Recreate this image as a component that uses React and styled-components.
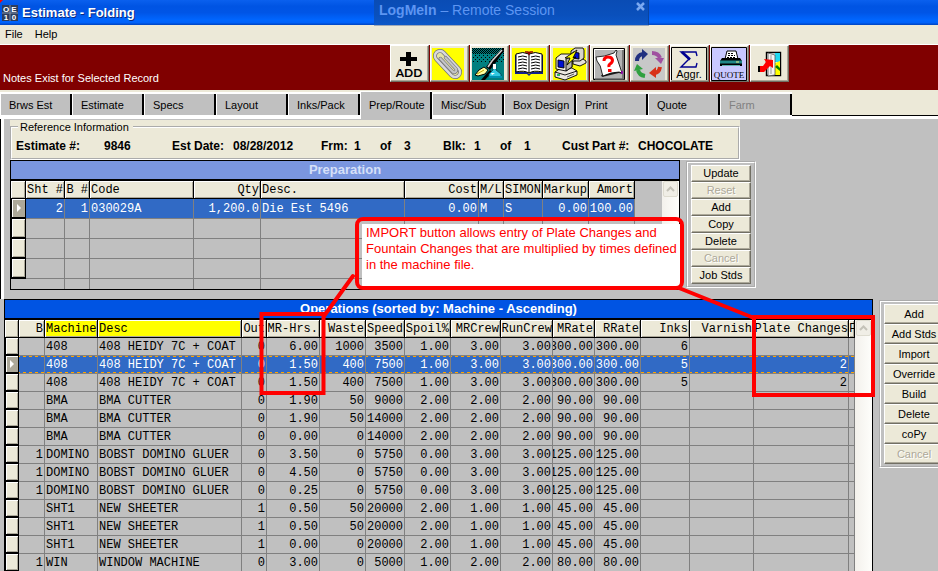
import React from "react";
import styled, { createGlobalStyle, css } from "styled-components";

const FACE = "#ece9d8";
const GRAY = "#c0c0c0";
const LINE = "#808080";
const SELECT = "#316ac5";
const SANS = '"Liberation Sans", Arial, sans-serif';
const MONO = '"Liberation Mono", "Courier New", monospace';

const Global = createGlobalStyle`
  * { box-sizing: border-box; }
  html, body, #root { height: 100%; }
  body { margin: 0; overflow: hidden; background: ${GRAY}; font: 11px/14px ${SANS}; color: #000; }
  button { font: inherit; color: inherit; }
`;

const Window = styled.div`
  position: relative;
  min-height: 100%;
  overflow: hidden;
`;

const TitleBar = styled.header`
  display: flex;
  align-items: center;
  gap: 4px;
  height: 25px;
  padding-left: 2px;
  background: linear-gradient(#0a60ee 0, #0054e3 25%, #0055e6 50%, #0066ff 80%, #0062fa 90%, #0043bf 100%);
`;

const Title = styled.h1`
  margin: 0;
  color: #fff;
  font: bold 13px/16px ${SANS};
  text-shadow: 1px 1px 0 #0a2a80;
`;

const RemoteBanner = styled.div`
  position: absolute;
  top: 0;
  left: 374px;
  display: flex;
  justify-content: space-between;
  align-items: flex-start;
  width: 275px;
  height: 25px;
  padding: 2px 3px 0 5px;
  background: linear-gradient(#0a4cb4, #0a50bc 60%, #0c57c8);
  border-right: 1px solid #0a44a0;
  box-shadow: 0 1px 0 #9fa9b8;
  color: #5d95f2;
  font-size: 14px;
  line-height: 17px;
`;

const CloseRemote = styled.button`
  display: flex;
  padding: 0;
  border: 0;
  background: none;
`;

const MenuBar = styled.nav`
  display: flex;
  gap: 12px;
  height: 20px;
  padding: 2px 5px;
  background: ${FACE};
  border-bottom: 1px solid #fff;
`;

const MenuItem = styled.button`
  padding: 0;
  border: 0;
  background: none;
  line-height: 15px;
`;

const Toolbar = styled.div`
  display: flex;
  height: 45px;
  background: #800000;
`;

const Notes = styled.div`
  flex: 0 0 390px;
  align-self: flex-end;
  padding: 0 0 5px 3px;
  color: #fff;
`;

const Tools = styled.div`
  display: flex;
  align-items: flex-start;
  gap: 1px;
`;

const ToolButton = styled.button`
  display: block;
  width: 39px;
  height: 37px;
  padding: 0;
  background: ${FACE};
  border: 1px solid;
  border-color: #fff #716f64 #716f64 #fff;
  box-shadow: inset -1px -1px 0 #aca899;

  svg { display: block; }
`;

const TabBar = styled.div`
  display: flex;
  align-items: flex-end;
  height: 29px;
  background: ${FACE};
`;

const Tab = styled.button`
  display: flex;
  align-items: flex-start;
  flex: 0 0 72px;
  height: 27px;
  padding: 4px 0 0 8px;
  white-space: nowrap;
  overflow: hidden;
  line-height: 14px;
  color: ${(p) => (p.disabled ? "#808080" : "#000")};
  background: ${GRAY};
  border: 0;
  border-top: 2px solid #fff;
  border-left: 1px solid #fff;
  border-bottom: 4px solid #fff;
  box-shadow: inset -2px 0 0 #000;

  ${(p) =>
    p.$active &&
    css`
      height: 28px;
      padding-top: 6px;
      border-top-width: 1px;
      border-bottom: 0;
    `}
`;

const TabRule = styled.div`
  flex: 1;
  height: 4px;
  background: #fff;
  border-top: 1px solid #000;
`;

const Upper = styled.section`
  height: 180px;
  padding: 1px 0 0 9px;
  border-left: 1px solid #000;
  box-shadow: inset 3px 0 0 #fff;
`;

const ReferenceBox = styled.div`
  width: 730px;
  background: ${FACE};
`;

const Reference = styled.fieldset`
  margin: 0;
  padding: 4px;
  border: 2px groove #fff;
  min-width: 0;

  legend {
    margin-left: 2px;
    padding: 0 4px 0 2px;
    line-height: 14px;
  }
`;

const Facts = styled.dl`
  display: grid;
  grid-template-columns: 88px 68px 61px 88px 33px 26px 24px 39px 31px 26px 24px 38px 76px 1fr;
  margin: 0;
  font: bold 12px/16px ${SANS};
  white-space: nowrap;

  dt, dd { margin: 0; }
`;

const Split = styled.div`
  display: flex;
  align-items: flex-start;
  gap: 6px;
`;

const OpsSplit = styled(Split)`
  padding-left: 4px;
`;

const GridPanel = styled.section`
  flex: none;
  border: 1px solid #000;
  background: ${GRAY};
`;

const GridTitle = styled.h2`
  margin: 0;
  height: 20px;
  text-align: center;
  font: bold 13px/18px ${SANS};
  border-bottom: 2px solid #000;
  color: ${(p) => (p.$faded ? "#d6e0f8" : "#fff")};
  background: ${(p) => (p.$faded ? "#7a96df" : "#0054e3")};
`;

const GridBody = styled.div`
  display: flex;
  gap: ${(p) => p.$gap || 0}px;
`;

const Grid = styled.table`
  flex: none;
  table-layout: fixed;
  border-collapse: separate;
  border-spacing: 0;
  font: 12px/16px ${MONO};
  white-space: nowrap;
`;

const HeadCell = styled.th`
  height: 18px;
  padding: 0;
  font-weight: normal;
  background: ${(p) => (p.$key ? "#ffff00" : FACE)};
  border-right: 1px solid #000;
  border-bottom: 1px solid #000;
  box-shadow: inset 1px 1px 0 #fff, inset -1px -1px 0 #aca899;
`;

const Row = styled.tr`
  height: ${(p) => p.$height}px;
  ${(p) =>
    p.$selected &&
    css`
      color: #fff;
      background: ${SELECT};
    `}
`;

const FocusRow = styled(Row)`
  background-image: repeating-linear-gradient(90deg, #ffa500 0 3px, transparent 3px 6px),
    repeating-linear-gradient(90deg, #ffa500 0 3px, transparent 3px 6px);
  background-size: 100% 1px;
  background-repeat: no-repeat;
  background-position: 0 0, 0 16px;
`;

const Cell = styled.td`
  padding: 0;
  border-right: 1px solid ${LINE};
  border-bottom: 1px solid ${LINE};
`;

const Clip = styled.span`
  display: flex;
  justify-content: ${(p) => (p.$right ? "flex-end" : "flex-start")};
  padding: 0 ${(p) => (p.$tight ? 0 : 1)}px;
  overflow: hidden;
`;

const RowMarker = styled.td`
  padding: 0;
  background: ${(p) => (p.$current ? "#aca899" : FACE)};
  border: solid #000;
  border-width: 0 1px 2px;
  box-shadow: inset 1px 1px 0 #fff, inset -1px -1px 0 #aca899;

  svg { display: block; margin: auto; }
`;

const ScrollTrack = styled.div`
  flex: 0 0 17px;
  background: linear-gradient(90deg, #f3f1ec, #fefefb);
`;

const ScrollUp = styled.button`
  display: flex;
  align-items: center;
  justify-content: center;
  width: 15px;
  height: 16px;
  margin: 0 1px;
  padding: 0;
  border: 1px solid #dedcd0;
  border-radius: 2px;
  background: #f0eee6;
`;

const ActionPanel = styled.div`
  flex: none;
  display: flex;
  flex-direction: column;
  margin-top: 1px;
  padding: 2px 3px;
  border: 2px groove #fff;
`;

const Action = styled.button`
  width: 60px;
  height: ${(p) => (p.$tall ? 20 : 17)}px;
  padding: 0;
  line-height: 13px;
  background: ${FACE};
  border: 1px solid;
  border-color: #fff #716f64 #716f64 #fff;
  box-shadow: inset -1px -1px 0 #aca899;

  &:disabled {
    color: #aca899;
    text-shadow: 1px 1px 0 #fff;
  }
`;

const Marks = styled.svg`
  position: absolute;
  top: 0;
  left: 0;
  pointer-events: none;
`;

const Callout = styled.p`
  position: absolute;
  top: 224px;
  left: 362px;
  width: 318px;
  height: 62px;
  margin: 0;
  padding: 1px 0 0 4px;
  background: #fff;
  color: #f00;
  font-size: 13px;
  line-height: 16px;
  white-space: nowrap;
`;

/* ---------- toolbar drawings ---------- */

const Art = ({ children }) => (
  <svg width="36" height="34" viewBox="0 0 36 34" aria-hidden="true">
    {children}
  </svg>
);

const AddArt = () => (
  <Art>
    <path d="M15 5h5v5h6v4h-6v5h-5v-5H9v-4h6z" />
    <text x="18" y="30" textAnchor="middle" fontFamily="Lato, sans-serif" fontWeight="bold" fontSize="12">ADD</text>
  </Art>
);

const ClipArt = () => (
  <Art>
    <path d="M1 1h32v32H1z" fill="#ff0" />
    <g transform="translate(16.500 17) rotate(47)" fill="none" strokeLinecap="round">
      <rect x="-16" y="-5" width="32" height="10" rx="5" fill="#e4e4a8" stroke="#707074" strokeWidth="4" />
      <rect x="-16" y="-5" width="32" height="10" rx="5" stroke="#d8d8dc" strokeWidth="2.600" />
      <path d="M-9 1.500h18a2.200 2.200 0 0 0 0-4.400H-6" stroke="#707074" strokeWidth="3.400" />
      <path d="M-9 1.500h18a2.200 2.200 0 0 0 0-4.400H-6" stroke="#c4c4c8" strokeWidth="2.200" />
    </g>
  </Art>
);

const PenArt = () => (
  <Art>
    <defs>
      <pattern id="dots" width="2" height="2" patternUnits="userSpaceOnUse">
        <path d="M0 0h1v1H0zM1 1h1v1H1z" />
      </pattern>
      <pattern id="sparse" width="4" height="4" patternUnits="userSpaceOnUse">
        <path d="M0 0h1v1H0zM2 2h1v1H2z" />
      </pattern>
    </defs>
    <path d="M1 1h32v32H1z" fill="#008080" />
    <path d="M1 1h32v6H1z" fill="url(#dots)" />
    <path d="M1 7h32v9H1z" fill="url(#sparse)" />
    <path d="M10 33l6-7 3-3 2 2-7 8z" fill="#000" />
    <path d="M32 1L21 12l-6 8 4 3 7-9 7-11V1z" fill="#000" />
    <path d="M31 3L21 14l-4 6" stroke="#d0d0d0" strokeWidth="1.600" fill="none" />
    <path d="M13 20l4 3-3 4-7 2-3-1 4-5z" fill="#ffffa0" stroke="#000" />
    <path d="M6 27l7-4" stroke="#c0a000" />
    <path d="M22 17h3v6l5 4v3H18v-3l4-4z" fill="#30c8e0" stroke="#003c50" strokeWidth=".8" />
    <path d="M22 17h3v5h-3zM20 26h4l-3 2z" fill="#fff" />
    <path d="M18 29h13v2H18z" fill="#0090b0" />
  </Art>
);

const BookArt = () => (
  <Art>
    <path d="M1 1h34v32H1z" fill="#ff0" />
    <path d="M4 8h3v17h9l2 2 2-2h10V8h2v19H20l-2 2-2-2H4z" fill="#102090" />
    <path d="M5 7q7-3 13 0q6-3 13 0v18q-8-2-13 1q-5-3-13-1z" fill="#fff" stroke="#000" />
    <path d="M18 7v19" stroke="#000" />
    <path d="M14 5h3l1 2 1-2h3" stroke="#900000" strokeWidth="1.600" fill="none" />
    <path
      d="M7 10q5-2 9 0M7 13q5-2 9 0M7 16q5-2 9 0M7 19q5-2 9 0M7 22q5-2 9 0M20 10q5-2 9 0M20 13q5-2 9 0M20 16q5-2 9 0M20 19q5-2 9 0M20 22q5-2 9 0"
      stroke="#000" fill="none"
    />
  </Art>
);

const ComputersArt = () => (
  <Art>
    <path d="M2 1h33v32H2z" fill="#ff0" />
    <g stroke="#000" strokeLinejoin="round" strokeWidth=".9">
      <path d="M22 14l3-2h7l3 2v2l-6 3-7-2z" fill="#e4e0d8" />
      <path d="M20 4l4-3h8l1 2v8l-4 3h-9z" fill="#d8d4cc" />
      <path d="M22 5l6 1v6l-6-1z" fill="#0010d0" />
      <path d="M4 25l6-4h11l5 3v4l-12 5-10-3z" fill="#ece8e0" />
      <path d="M4 25l10 3 12-4" fill="none" />
      <path d="M5 11l5-4h10l1 2v11l-6 4-10-2z" fill="#f0ece4" />
      <path d="M15 24V12l6-3v11z" fill="#b8b4ac" />
      <path d="M7 13l6 1v7l-6-1z" fill="#0010d0" />
      <path d="M14 11L26 3l-4 8 3-1-9 8 3-7z" fill="#ff0" />
    </g>
    <path d="M6 28h3" stroke="#00a040" strokeWidth="1.600" />
    <path d="M16 30l7-3" stroke="#555" />
  </Art>
);

const NoteArt = () => (
  <Art>
    <path d="M2.500 1.500h31v31h-31z" fill="#b4b4b4" stroke="#000" />
    <path d="M3.500 31V2.500h29" stroke="#fff" fill="none" />
    <path d="M32 3v29H4" stroke="#686868" fill="none" strokeWidth="1.600" />
    <path d="M11 30l17-4 3 1-1-3-5-14-2 1 5 13-18 4z" fill="#222" />
    <path d="M5 10q8 0 18-4l2-3 1 1-1 4 6 18-3-1q-8 0-16 4l-1-3q-1-8-5-12z" fill="#fff" stroke="#000" strokeWidth=".8" />
    <path d="M13 14q0-4 4-4t4.500 3q0 2.500-2.500 4-1.500 1-1 3" fill="none" stroke="#f00" strokeWidth="3" />
    <path d="M17 22h3.500v3H17z" fill="#f00" />
    <path d="M31 24v3" stroke="#a000c0" strokeWidth="1.500" />
  </Art>
);

const CycleArt = () => (
  <Art>
    <path d="M2 1h32v32H2z" fill="#c8c8c8" />
    <g fill="none" strokeWidth="4">
      <path d="M6 14q0-6 6-7" stroke="#203080" />
      <path d="M21 6q6 0 8 5" stroke="#a050a0" />
      <path d="M29 20q-1 6-6 6" stroke="#d83018" />
      <path d="M14 29q-6-1-7-6" stroke="#30a040" />
    </g>
    <path d="M11 2l6 5-6 6z" fill="#203080" />
    <path d="M24 11h9l-3 6z" fill="#a050a0" />
    <path d="M25 20v11l-7-5z" fill="#d83018" />
    <path d="M3 24l3-7 6 5z" fill="#30a040" />
  </Art>
);

const AggregateArt = () => (
  <Art>
    <path d="M.5 33V.5h35V33" fill="none" stroke="#000" />
    <path d="M26 9l-1-4H10l8 7-8 8h15l1-4" fill="none" stroke="#000090" strokeWidth="1.400" />
    <path d="M11 5l8 7.500" stroke="#000090" strokeWidth="2.600" />
    <text x="18" y="31" textAnchor="middle" fontFamily="Liberation Sans" fontSize="11">Aggr.</text>
  </Art>
);

const QuoteArt = () => (
  <Art>
    <path d="M.5.5h35v33H.5z" fill="#c8c8ff" stroke="#000" />
    <path d="M14 12l2-8h9l2 8z" fill="#fff" stroke="#000" />
    <path d="M17 6.500h6M17 8.500h7M16 10.500h8" stroke="#000" strokeDasharray="2 1" />
    <path d="M11 11h18l2 3v5H9v-5z" fill="#000" />
    <path d="M9 13.500h22v3H9z" fill="#208888" />
    <path d="M11 18.500h18" stroke="#60b0b0" />
    <path d="M25 15h3" stroke="#f0f080" />
    <text x="18" y="31" textAnchor="middle" fontFamily="Liberation Serif" fontSize="9">QUOTE</text>
  </Art>
);

const ExitArt = () => (
  <Art>
    <path d="M15.500 5.500h14v23h-14z" fill="#fff" stroke="#000" strokeWidth="1.400" />
    <path d="M24 6h5v9h-5z" fill="#20d8f0" />
    <path d="M24 16l5-2v14h-5z" fill="#ff0" />
    <path d="M24 20l2-2 3 3v3z" fill="#008000" />
    <path d="M17 6l7 2v20l-7 1z" fill="#f4f4f4" stroke="#555" strokeWidth=".8" />
    <path d="M20 8v19" stroke="#999" />
    <path d="M7 19h4v6H7z" fill="#000" />
    <path d="M9 19h3l3-4-2-3 9 1v8l-3-2-6 6H9z" fill="#f00" />
  </Art>
);

const AppIcon = () => (
  <svg width="16" height="16" viewBox="0 0 16 16" aria-hidden="true">
    <path d="M0 0h16v16H0z" fill="#2c3c5c" />
    <path d="M8 0v16M0 8h16" stroke="#8090a8" />
    <g fill="#fff" fontFamily="Liberation Sans" fontWeight="bold" fontSize="8" textAnchor="middle">
      <text x="4" y="7">O</text>
      <text x="12" y="7">E</text>
      <text x="4" y="15">1</text>
      <text x="12" y="15">0</text>
    </g>
  </svg>
);

const TOOLS = [
  ["Add", AddArt],
  ["Attachments", ClipArt],
  ["Notes", PenArt],
  ["Log", BookArt],
  ["Transfer", ComputersArt],
  ["Help", NoteArt],
  ["Recalculate", CycleArt],
  ["Aggregate", AggregateArt],
  ["Print quote", QuoteArt],
  ["Exit", ExitArt],
];

const TABS = ["Brws Est", "Estimate", "Specs", "Layout", "Inks/Pack", "Prep/Route", "Misc/Sub", "Box Design", "Print", "Quote", "Farm"];

const FACTS = [
  ["Estimate #:", "9846"],
  ["Est Date:", "08/28/2012"],
  ["Frm:", "1"],
  ["of", "3"],
  ["Blk:", "1"],
  ["of", "1"],
  ["Cust Part #:", "CHOCOLATE"],
];

const col = (name, width, right = true, key = false) => ({ name, width, right, key });

const PREP_COLUMNS = [
  col("Sht #", 39), col("B #", 25), col("Code", 104, false), col("Qty", 67), col("Desc.", 144, false),
  col("Cost", 74), col("M/L", 25, false), col("SIMON", 39, false), col("Markup", 46), col("Amort", 46),
];

const PREP_ROWS = [
  ["2", "1", "030029A", "1,200.0", "Die Est 5496", "0.00", "M", "S", "0.00", "100.00"],
  [], [], [],
];

const OPS_COLUMNS = [
  col("B", 26), col("Machine", 53, false, true), col("Desc", 144, false, true), col("Out", 25),
  col("MR-Hrs.", 53), col("Waste", 46), col("Speed", 39), col("Spoil%", 46), col("MRCrew", 50),
  col("RunCrew", 52), col("MRate", 42), col("RRate", 46), col("Inks", 49), col("Varnish", 64),
  col("Plate Changes", 95), col("F", 6, false),
];

const TIGHT_HEADS = ["RunCrew", "Plate Changes", "F"];

const OPS_ROWS = [
  ["", "408", "408 HEIDY 7C + COAT", "0", "6.00", "1000", "3500", "1.00", "3.00", "3.00", "300.00", "300.00", "6"],
  ["", "408", "408 HEIDY 7C + COAT", "0", "1.50", "400", "7500", "1.00", "3.00", "3.00", "300.00", "300.00", "5", "", "2"],
  ["", "408", "408 HEIDY 7C + COAT", "0", "1.50", "400", "7500", "1.00", "3.00", "3.00", "300.00", "300.00", "5", "", "2"],
  ["", "BMA", "BMA CUTTER", "0", "1.90", "50", "9000", "2.00", "2.00", "2.00", "90.00", "90.00"],
  ["", "BMA", "BMA CUTTER", "0", "1.90", "50", "14000", "2.00", "2.00", "2.00", "90.00", "90.00"],
  ["", "BMA", "BMA CUTTER", "0", "0.00", "0", "14000", "2.00", "2.00", "2.00", "90.00", "90.00"],
  ["1", "DOMINO", "BOBST DOMINO GLUER", "0", "3.50", "0", "5750", "0.00", "3.00", "3.00", "125.00", "125.00"],
  ["1", "DOMINO", "BOBST DOMINO GLUER", "0", "4.50", "0", "5750", "0.00", "3.00", "3.00", "125.00", "125.00"],
  ["1", "DOMINO", "BOBST DOMINO GLUER", "0", "0.25", "0", "5750", "0.00", "3.00", "3.00", "125.00", "125.00"],
  ["", "SHT1", "NEW SHEETER", "1", "0.50", "50", "20000", "2.00", "1.00", "1.00", "45.00", "45.00"],
  ["", "SHT1", "NEW SHEETER", "1", "0.50", "50", "20000", "2.00", "1.00", "1.00", "45.00", "45.00"],
  ["", "SHT1", "NEW SHEETER", "1", "0.00", "0", "20000", "2.00", "1.00", "1.00", "45.00", "45.00"],
  ["1", "WIN", "WINDOW MACHINE", "0", "3.00", "0", "5000", "1.00", "2.00", "2.00", "80.00", "80.00"],
];

function DataGrid({ columns, rows, markerWidth, rowHeight, selected, focus, stub }) {
  const total = columns.reduce((sum, c) => sum + c.width, markerWidth);
  return (
    <Grid style={{ width: total }}>
      <colgroup>
        <col style={{ width: markerWidth }} />
        {columns.map((c) => <col key={c.name} style={{ width: c.width }} />)}
      </colgroup>
      <thead>
        <tr>
          <HeadCell />
          {columns.map((c) => (
            <HeadCell key={c.name} $key={c.key} scope="col">
              <Clip $right={c.right} $tight={TIGHT_HEADS.includes(c.name)}>{c.name}</Clip>
            </HeadCell>
          ))}
        </tr>
      </thead>
      <tbody>
        {rows.map((row, r) => {
          const current = r === selected;
          const Line = current && focus ? FocusRow : Row;
          return (
            <Line key={r} $height={rowHeight} $selected={current}>
              <RowMarker $current={current}>
                {current && (
                  <svg width="6" height="8" viewBox="0 0 6 8"><path d="M1 0l4 4-4 4z" fill="#fff" /></svg>
                )}
              </RowMarker>
              {columns.map((c, i) => (
                <Cell key={c.name}><Clip $right={c.right}>{row[i]}</Clip></Cell>
              ))}
            </Line>
          );
        })}
        {stub && (
          <Row $height={stub}>
            <td />
            {columns.map((c) => <Cell key={c.name} style={{ borderBottom: 0 }} />)}
          </Row>
        )}
      </tbody>
    </Grid>
  );
}

const Scroll = () => (
  <ScrollTrack>
    <ScrollUp aria-label="Scroll up">
      <svg width="9" height="6" viewBox="0 0 9 6"><path d="M1 5l3.500-3.500L8 5" fill="none" stroke="#c4c2b8" strokeWidth="2" /></svg>
    </ScrollUp>
  </ScrollTrack>
);

const Actions = ({ names, disabled, tall }) => (
  <ActionPanel>
    {names.map((n) => <Action key={n} $tall={tall} disabled={disabled.includes(n)}>{n}</Action>)}
  </ActionPanel>
);

export default function App() {
  return (
    <Window>
      <Global />
      <TitleBar>
        <AppIcon />
        <Title>Estimate - Folding</Title>
      </TitleBar>
      <MenuBar>
        <MenuItem>File</MenuItem>
        <MenuItem>Help</MenuItem>
      </MenuBar>
      <Toolbar>
        <Notes>Notes Exist for Selected Record</Notes>
        <Tools>
          {TOOLS.map(([name, Drawing]) => (
            <ToolButton key={name} aria-label={name}><Drawing /></ToolButton>
          ))}
        </Tools>
      </Toolbar>
      <TabBar>
        {TABS.map((t) => <Tab key={t} $active={t === "Prep/Route"} disabled={t === "Farm"}>{t}</Tab>)}
        <TabRule />
      </TabBar>

      <Upper>
        <ReferenceBox>
          <Reference>
            <legend>Reference Information</legend>
            <Facts>
              {FACTS.map(([k, v], i) => (
                <React.Fragment key={i}><dt>{k}</dt><dd>{v}</dd></React.Fragment>
              ))}
            </Facts>
          </Reference>
        </ReferenceBox>
        <Split>
          <GridPanel>
            <GridTitle $faded>Preparation</GridTitle>
            <GridBody $gap={27}>
              <DataGrid columns={PREP_COLUMNS} rows={PREP_ROWS} markerWidth={15} rowHeight={20} selected={0} stub={10} />
              <Scroll />
            </GridBody>
          </GridPanel>
          <Actions names={["Update", "Reset", "Add", "Copy", "Delete", "Cancel", "Job Stds"]} disabled={["Reset", "Cancel"]} />
        </Split>
      </Upper>

      <OpsSplit>
        <GridPanel>
          <GridTitle>Operations (sorted by: Machine - Ascending)</GridTitle>
          <GridBody>
            <DataGrid columns={OPS_COLUMNS} rows={OPS_ROWS} markerWidth={14} rowHeight={18} selected={1} focus />
            <Scroll />
          </GridBody>
        </GridPanel>
        <Actions tall names={["Add", "Add Stds", "Import", "Override", "Build", "Delete", "coPy", "Cancel"]} disabled={["Cancel"]} />
      </OpsSplit>

      <RemoteBanner>
        <span><b>LogMeIn</b> – Remote Session</span>
        <CloseRemote aria-label="Close">
          <svg width="9" height="9" viewBox="0 0 9 9"><path d="M1 1l7 7M8 1L1 8" stroke="#7aa8f0" strokeWidth="2.500" /></svg>
        </CloseRemote>
      </RemoteBanner>
      <Callout>
        IMPORT button allows entry of Plate Changes and<br />
        Fountain Changes that are multiplied by times defined<br />
        in the machine file.
      </Callout>
      <Marks width="938" height="571" viewBox="0 0 938 571" fill="none" stroke="#f00" strokeWidth="4" aria-hidden="true">
        <path d="M0 0h3L0 3z" fill="#f00" stroke="none" />
        <rect x="357" y="219" width="325" height="69" rx="6" />
        <rect x="261.500" y="314" width="62" height="79" />
        <rect x="754" y="317" width="119" height="78" />
        <path d="M353 276L324 316M679 288l75 30" strokeLinecap="round" />
      </Marks>
    </Window>
  );
}
